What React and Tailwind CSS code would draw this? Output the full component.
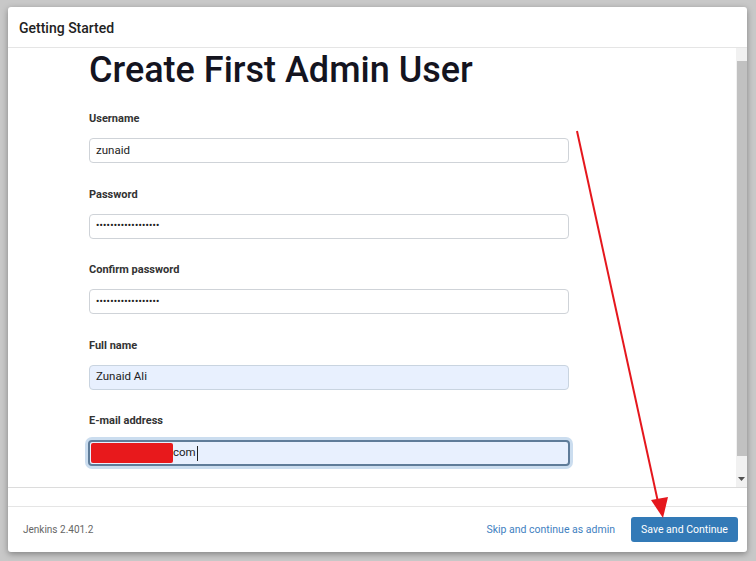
import React from "react";

const font = { fontFamily: "Roboto, 'Liberation Sans', sans-serif" };

function Field({ label, children, last }) {
  return (
    <div className={last ? "" : "mb-[23.5px]"}>
      <div className="h-4 leading-4 text-[11px] font-bold text-[#333] mb-[11px]">{label}</div>
      {children}
    </div>
  );
}

function Box({ children, filled }) {
  return (
    <div
      className={
        "h-[25px] w-[480px] rounded-[4px] border flex items-center px-[6px] text-[11.5px] text-[#222] " +
        (filled ? "bg-[#e8f0fe] border-[#c9d4e0]" : "bg-white border-[#cfd3d8]")
      }
    >
      {children}
    </div>
  );
}

const dots = "••••••••••••••••••";

export default function App() {
  return (
    <div className="relative w-[756px] h-[561px] bg-[#c8c8c8] overflow-hidden pt-[7px] pl-[8px]" style={font}>
      <div className="w-[739px] h-[545px] bg-white rounded-[3px] shadow-[0_2px_6px_rgba(0,0,0,0.35)] flex flex-col">
        <div className="h-[41px] shrink-0 border-b border-[#e5e5e5] flex items-center pl-[11px] pt-[2px] text-[14px] font-medium text-[#222]">
          Getting Started
        </div>
        <div className="h-[440px] shrink-0 border-b border-[#dcdcdc] flex">
          <div className="flex-1 pl-[81px] pt-[3px]">
            <div className="h-[38px] leading-[38px] text-[36px] font-medium text-[#14141f] mb-[22px]">
              Create First Admin User
            </div>
            <Field label="Username">
              <Box>zunaid</Box>
            </Field>
            <Field label="Password">
              <Box><span className="text-[9px] font-bold tracking-[0.3px]">{dots}</span></Box>
            </Field>
            <Field label="Confirm password">
              <Box><span className="text-[9px] font-bold tracking-[0.3px]">{dots}</span></Box>
            </Field>
            <Field label="Full name">
              <Box filled>Zunaid Ali</Box>
            </Field>
            <Field label="E-mail address" last>
              <div className="h-[26px] w-[482px] -ml-px rounded-[4px] border-2 border-[#5f7c99] bg-[#e8f0fe] shadow-[0_0_0_3px_rgba(140,180,220,0.45)] flex items-center pl-[1px] text-[11.5px] text-[#222]">
                <span className="inline-block w-[82px] h-[20px] bg-[#e8191c] rounded-[2px]"></span>
                <span>com</span>
                <span className="inline-block w-px h-[15px] bg-[#222] ml-[1px]"></span>
              </div>
            </Field>
          </div>
          <div className="w-[11px] bg-[#f1f1f1] flex flex-col items-end">
            <div className="h-[13px]"></div>
            <div className="w-[10px] h-[395px] bg-[#c1c1c1]"></div>
            <div className="flex-1"></div>
            <div className="h-[12px] w-[11px] flex items-center justify-center">
              <svg width="7" height="4" viewBox="0 0 7 4"><path d="M0 0 L7 0 L3.5 4 Z" fill="#505050" /></svg>
            </div>
            <div className="h-[2px]"></div>
          </div>
        </div>
        <div className="h-[19px] shrink-0 border-b border-[#e5e5e5]"></div>
        <div className="flex-1 flex items-center justify-between pl-[15px] pr-[9px]">
          <span className="text-[10px] text-[#666]">Jenkins 2.401.2</span>
          <div className="flex items-center gap-4">
            <span className="text-[10.5px] text-[#3f7fbf]">Skip and continue as admin</span>
            <div className="h-[25px] w-[107px] rounded-[3px] bg-[#337ab7] text-white text-[10.5px] flex items-center justify-center">
              Save and Continue
            </div>
          </div>
        </div>
      </div>
      <svg className="absolute left-0 top-0 pointer-events-none" width="756" height="561" viewBox="0 0 756 561">
        <line x1="577" y1="131" x2="658" y2="502" stroke="#e5171d" strokeWidth="2" />
        <path d="M651 500 L668 497 L663 518 Z" fill="#e5171d" />
      </svg>
    </div>
  );
}
